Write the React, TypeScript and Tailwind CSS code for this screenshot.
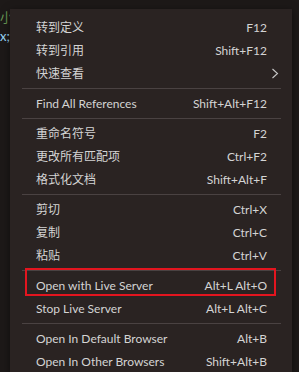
import React from "react";

type Item = { label: string; keys?: string; submenu?: boolean; boxed?: boolean };

const groups: Item[][] = [
  [
    { label: "转到定义", keys: "F12" },
    { label: "转到引用", keys: "Shift+F12" },
    { label: "快速查看", submenu: true },
  ],
  [{ label: "Find All References", keys: "Shift+Alt+F12" }],
  [
    { label: "重命名符号", keys: "F2" },
    { label: "更改所有匹配项", keys: "Ctrl+F2" },
    { label: "格式化文档", keys: "Shift+Alt+F" },
  ],
  [
    { label: "剪切", keys: "Ctrl+X" },
    { label: "复制", keys: "Ctrl+C" },
    { label: "粘贴", keys: "Ctrl+V" },
  ],
  [
    { label: "Open with Live Server", keys: "Alt+L Alt+O", boxed: true },
    { label: "Stop Live Server", keys: "Alt+L Alt+C" },
  ],
  [
    { label: "Open In Default Browser", keys: "Alt+B" },
    { label: "Open In Other Browsers", keys: "Shift+Alt+B" },
  ],
];

function Row({ item }: { item: Item }) {
  return (
    <div className="relative flex h-[23px] items-center justify-between pl-[26px] pr-[25px]">
      <span>{item.label}</span>
      {item.keys && <span>{item.keys}</span>}
      {item.submenu && (
        <svg className="absolute right-[13px] top-[6px] h-[11px] w-[8px]" viewBox="0 0 8 11" fill="none">
          <path d="M1.5 1l5 4.5-5 4.5" stroke="#c8c8c8" strokeWidth="1.1" />
        </svg>
      )}
      {item.boxed && (
        <div className="pointer-events-none absolute -top-[6px] bottom-[1px] left-[15px] right-[16px] border-2 border-[#e3151f]" />
      )}
    </div>
  );
}

export default function App() {
  return (
    <div
      className="relative h-[372px] w-[299px] overflow-hidden bg-[#1d1918]"
      style={{ fontFamily: 'Lato, "Noto Sans CJK SC", sans-serif' }}
    >
      {/* editor text behind the menu */}
      <div className="pt-[8px] text-[13px] leading-[19px]">
        <div className="text-[#6a9955]">小</div>
        <div className="text-[#9cdcfe]">x;</div>
      </div>

      {/* context menu */}
      <div className="absolute left-[10px] top-[9px] w-[282px] bg-[#2a2322] pt-[7px] text-[12px] text-[#d4d4d4] shadow-[0_2px_8px_rgba(0,0,0,0.5)]">
        {groups.map((g, i) => (
          <div key={i}>
            {i > 0 && <div className="ml-[12px] mr-[11px] my-[3px] h-px bg-[#4a4242]" />}
            {g.map((item) => (
              <Row key={item.label} item={item} />
            ))}
          </div>
        ))}
      </div>
    </div>
  );
}
